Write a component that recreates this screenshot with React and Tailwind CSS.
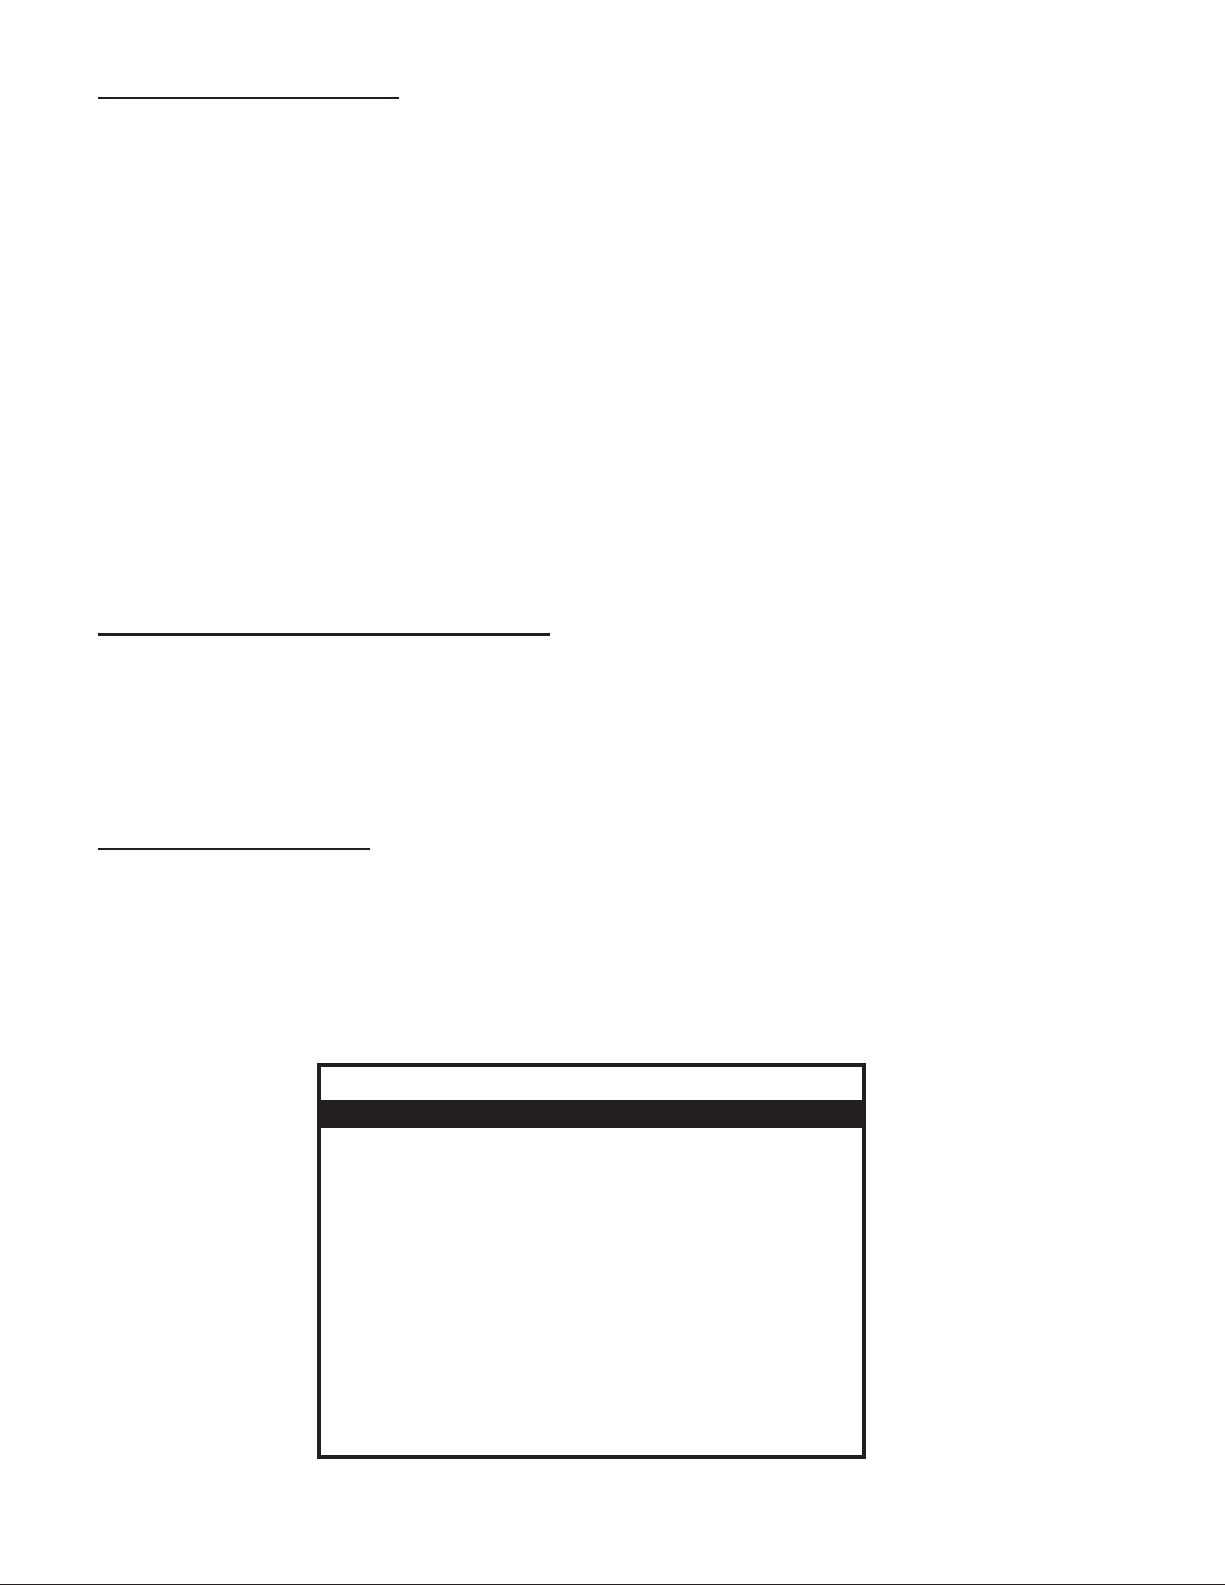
export default function App() {
  return (
    <div className="w-[1225px] h-[1585px] bg-white flex flex-col">
      {/* section rules */}
      <div className="ml-[98px] mt-[97px] w-[301px] h-[1.5px] bg-[#231f20]" />
      <div className="ml-[98px] mt-[534.5px] w-[452px] h-[2.5px] bg-[#231f20]" />
      <div className="ml-[98px] mt-[212.5px] w-[272px] h-[1.5px] bg-[#231f20]" />

      {/* framed table */}
      <div className="ml-[317px] mt-[213.5px] w-[549px] h-[396px] border-4 border-[#231f20] flex flex-col">
        <div className="h-[33px]" />
        <div className="h-[28px] bg-[#231f20]" />
        <div className="flex-1" />
      </div>

      <div className="mt-auto w-full h-px bg-[#231f20]" />
    </div>
  );
}
